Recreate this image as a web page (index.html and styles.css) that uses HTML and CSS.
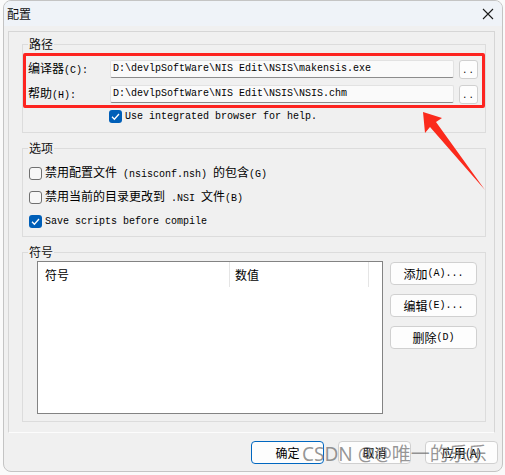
FILE: index.html
```html
<!DOCTYPE html>
<html lang="zh">
<head>
<meta charset="utf-8">
<title>配置</title>
<link rel="stylesheet" href="styles.css">
</head>
<body>
<div class="window">
  <div class="titlebar">
    <span class="title zh">配置</span>
    <svg class="close" width="12" height="12" viewBox="0 0 12 12"><path d="M1 1 L11 11 M11 1 L1 11" stroke="#1b1b1b" stroke-width="1.1" fill="none"/></svg>
  </div>
  <div class="panel">
    <div class="group g1">
      <div class="legend zh">路径</div>
      <div class="highlight">
        <div class="prow">
          <span class="plabel"><span class="zh">编译器</span>(C):</span>
          <div class="field">D:\devlpSoftWare\NIS Edit\NSIS\makensis.exe</div>
          <div class="browse">..</div>
        </div>
        <div class="prow">
          <span class="plabel"><span class="zh">帮助</span>(H):</span>
          <div class="field">D:\devlpSoftWare\NIS Edit\NSIS\NSIS.chm</div>
          <div class="browse">..</div>
        </div>
      </div>
      <div class="chk chk-indent">
        <span class="cb on"><svg width="13" height="13" viewBox="0 0 13 13"><path d="M3 6.8 L5.4 9.2 L10 4" stroke="#fff" stroke-width="1.3" fill="none"/></svg></span>
        <span>Use integrated browser for help.</span>
      </div>
    </div>

    <div class="group g2">
      <div class="legend zh">选项</div>
      <div class="chk">
        <span class="cb"></span>
        <span><span class="zh">禁用配置文件</span> (nsisconf.nsh) <span class="zh">的包含</span>(G)</span>
      </div>
      <div class="chk">
        <span class="cb"></span>
        <span><span class="zh">禁用当前的目录更改到</span> .NSI <span class="zh">文件</span>(B)</span>
      </div>
      <div class="chk">
        <span class="cb on"><svg width="13" height="13" viewBox="0 0 13 13"><path d="M3 6.8 L5.4 9.2 L10 4" stroke="#fff" stroke-width="1.3" fill="none"/></svg></span>
        <span>Save scripts before compile</span>
      </div>
    </div>

    <div class="group g3">
      <div class="legend zh">符号</div>
      <div class="symrow">
        <div class="listbox">
          <div class="lhead">
            <div class="col c1 zh">符号</div>
            <div class="col c2 zh">数值</div>
          </div>
        </div>
        <div class="sidebtns">
          <div class="btn"><span class="zh">添加</span>(A)...</div>
          <div class="btn"><span class="zh">编辑</span>(E)...</div>
          <div class="btn"><span class="zh">删除</span>(D)</div>
        </div>
      </div>
    </div>
  </div>
  <div class="footer">
    <div class="fbtn default zh">确定</div>
    <div class="fbtn zh">取消</div>
    <div class="fbtn zh">应用(A)</div>
  </div>
</div>

<svg class="arrow" width="505" height="475" viewBox="0 0 505 475">
  <polygon points="423,112 442,118 436,122 485,190 430,127 425,133" fill="#fb2a1c"/>
</svg>
<div class="watermark">CSDN @@唯一的乐乐</div>
</body>
</html>
```

FILE: styles.css
```css
html, body {
  margin: 0;
  padding: 0;
}
body {
  width: 505px;
  height: 475px;
  background: #fafafa;
  font-family: "Liberation Mono", "Noto Sans CJK SC", monospace;
  font-size: 10px;
  line-height: 14px;
  color: #000;
  position: relative;
  overflow: hidden;
}
.zh {
  font-family: "Noto Sans CJK SC", sans-serif;
  font-size: 12px;
}
.window {
  margin-left: 3px;
  width: 500px;
  height: 472px;
  box-sizing: border-box;
  border: 1px solid #c4c4c4;
  border-radius: 8px;
  background: #f0f0f0;
  overflow: hidden;
  display: flex;
  flex-direction: column;
}
.titlebar {
  height: 25px;
  flex: none;
  background: #eff3f8;
  display: flex;
  align-items: center;
  justify-content: space-between;
  padding: 0 8px 0 3px;
}
.title {
  color: #111;
  line-height: 14px;
}
.close {
  display: block;
}
.panel {
  flex: none;
  margin: 5px 0 0 4px;
  width: 487px;
  height: 402px;
  box-sizing: border-box;
  border: 1px solid #d6d6d6;
  border-bottom-color: #fcfcfc;
  padding: 12px 0 0 13px;
  display: flex;
  flex-direction: column;
}
.group {
  position: relative;
  width: 464px;
  box-sizing: border-box;
  border: 1px solid #dcdcdc;
  flex: none;
}
.g1 { height: 89px; }
.g2 { height: 89px; margin-top: 15px; padding-top: 18px; }
.g3 { height: 170px; margin-top: 15px; }
.legend {
  position: absolute;
  top: -8px;
  left: 5px;
  padding: 0 1px;
  background: #f0f0f0;
  line-height: 14px;
  color: #111;
}
.highlight {
  margin-top: 8px;
  height: 55px;
  box-sizing: border-box;
  border: 3px solid #fd2420;
  border-radius: 2px;
  padding: 4px 0 1px 2px;
  display: flex;
  flex-direction: column;
  gap: 7px;
}
.prow {
  display: flex;
  align-items: center;
  height: 18px;
}
.plabel {
  width: 82px;
  flex: none;
  white-space: nowrap;
}
.field {
  width: 344px;
  height: 18px;
  box-sizing: border-box;
  flex: none;
  background: #fafafa;
  border: 1px solid #e2e2e2;
  border-bottom-color: #8c8c8c;
  border-radius: 2px;
  padding-left: 2px;
  line-height: 16px;
  white-space: nowrap;
  overflow: hidden;
}
.browse {
  margin-left: 5px;
  width: 19px;
  height: 19px;
  box-sizing: border-box;
  flex: none;
  background: #fdfdfd;
  border: 1px solid #d0d0d0;
  border-radius: 3px;
  text-align: center;
  line-height: 20px;
  font-size: 9px;
  letter-spacing: 1px;
}
.chk {
  display: flex;
  align-items: center;
  height: 13px;
  margin-left: 6px;
  gap: 3px;
  white-space: nowrap;
}
.g2 .chk + .chk { margin-top: 11px; }
.chk-indent {
  margin-left: 86px;
  margin-top: 2px;
}
.cb {
  width: 13px;
  height: 13px;
  box-sizing: border-box;
  flex: none;
  border: 1px solid #707070;
  border-radius: 3px;
  background: #f7f7f7;
  display: flex;
}
.cb.on {
  border: none;
  background: #005fb8;
}
.cb svg { display: block; }
.symrow {
  display: flex;
  margin: 8px 0 0 14px;
  gap: 7px;
}
.listbox {
  width: 346px;
  height: 153px;
  box-sizing: border-box;
  border: 1px solid #838383;
  background: #fff;
}
.lhead {
  display: flex;
  height: 25px;
}
.col {
  box-sizing: border-box;
  height: 25px;
  line-height: 25px;
  padding-left: 7px;
  border-right: 1px solid #e5e5e5;
}
.c1 { width: 192px; }
.c2 { width: 139px; padding-left: 5px; }
.sidebtns {
  display: flex;
  flex-direction: column;
  gap: 9px;
  padding-top: 1px;
}
.btn, .fbtn {
  width: 87px;
  height: 23px;
  box-sizing: border-box;
  background: #fdfdfd;
  border: 1px solid #d0d0d0;
  border-radius: 4px;
  display: flex;
  align-items: center;
  justify-content: center;
  white-space: nowrap;
}
.footer {
  display: flex;
  justify-content: flex-end;
  gap: 14px;
  margin-top: 8px;
  padding-right: 4px;
}
.fbtn {
  width: 73px;
}
.fbtn.default {
  border-color: #0067c0;
}
.arrow {
  position: absolute;
  left: 0;
  top: 0;
  pointer-events: none;
}
.watermark {
  position: absolute;
  left: 302px;
  top: 441px;
  font-family: "Noto Sans", "Noto Sans CJK SC", sans-serif;
  font-size: 19px;
  line-height: 26px;
  color: rgba(110, 110, 110, 0.72);
  white-space: nowrap;
  pointer-events: none;
}
```
